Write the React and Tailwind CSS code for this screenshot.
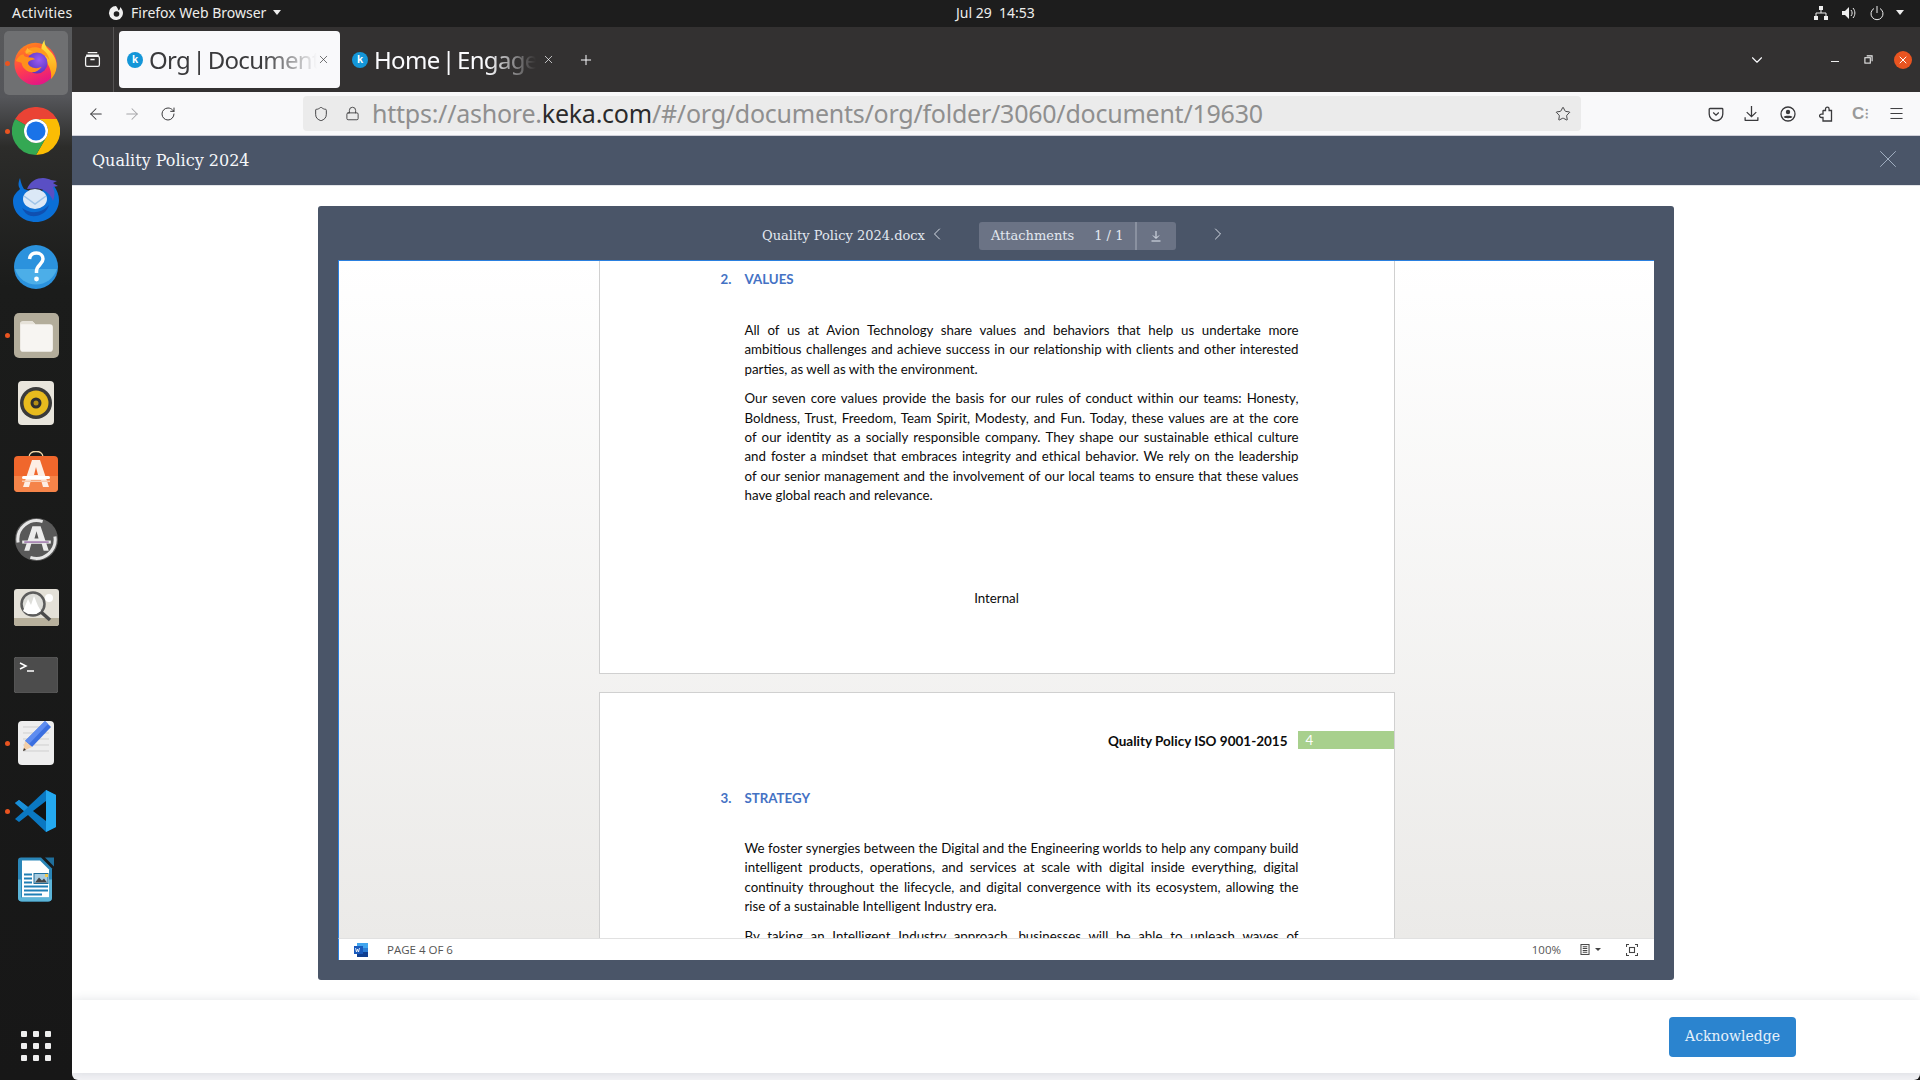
import React from 'react';
import { ArrowLeft, ArrowRight, RotateCw, Shield, Lock, Star, Menu, Plus, X, ChevronDown, ChevronLeft, ChevronRight } from 'lucide-react';

const FirefoxIcon = () => (
  <svg viewBox="0 0 48 48" className="w-[46px] h-[48px] mb-[3px]">
    <defs>
      <linearGradient id="ffBody" x1="0.2" y1="0" x2="0.6" y2="1">
        <stop offset="0" stopColor="#ff8a16" />
        <stop offset="0.55" stopColor="#ff3d50" />
        <stop offset="1" stopColor="#e31587" />
      </linearGradient>
      <linearGradient id="ffFlame" x1="0.5" y1="0" x2="0.5" y2="1">
        <stop offset="0" stopColor="#ffe847" />
        <stop offset="1" stopColor="#ff980e" />
      </linearGradient>
      <radialGradient id="ffCore" cx="0.6" cy="0.35" r="0.8">
        <stop offset="0" stopColor="#9a5cf0" />
        <stop offset="1" stopColor="#4a2ab8" />
      </radialGradient>
    </defs>
    <circle cx="23.5" cy="26" r="22" fill="url(#ffBody)" />
    <path d="M33 1c-.5 5 2 8 6 12 5 5 7 11 6.500 16-.5 6-3 10-6 13 1-5 0-11-4-17-3-5-6-8-6-14 0-4 2-8 3.500-10z" fill="url(#ffFlame)" />
    <path d="M12 13c4-4 11-6 17-3 4 2 8 6 9 12-4-5-9-7-14-6-5 0-10 2-12-3z" fill="#ff9a1f" />
    <circle cx="25" cy="25" r="11" fill="url(#ffCore)" />
    <path d="M3 23c2-4 5-7 8-7 0 2 2 3 5 3 4 0 6 1 7 2-3 1-6 1-7 3-1 2 1 4 3 5 3 2 7 2 11 0-3 5-9 7-14 5-4-2-7-6-7-9-2-1-4-1-6-2z" fill="#ff8f1c" />
    <path d="M14 15c-1-2 0-4 1-6 1 2 3 3 6 4-3 0-5 1-7 2z" fill="#ffb52e" />
  </svg>
);

const ChromeIcon = () => (
  <svg viewBox="0 0 48 48" className="w-[48px] h-[48px]">
    <path d="M3.200 12A24 24 0 0 1 44.800 12H24A12 12 0 0 0 13.600 18Z" fill="#ea4335" />
    <path d="M44.800 12A24 24 0 0 1 24 48L34.400 30A12 12 0 0 0 24 12Z" fill="#fbbc04" />
    <path d="M24 48A24 24 0 0 1 3.200 12L13.600 18A12 12 0 0 0 34.400 30Z" fill="#34a853" />
    <circle cx="24" cy="24" r="12" fill="#fff" />
    <circle cx="24" cy="24" r="9.500" fill="#1a73e8" />
  </svg>
);

const ThunderbirdIcon = () => (
  <svg viewBox="0 0 48 48" className="w-[48px] h-[48px]">
    <path d="M8 3c-2 5-2 8 0 11-3 3-7 6-7 12 0 12 10 21 23 21s23-10 23-22c0-5-2-10-5-14L24 18 12 14c-2-3-3-6-4-11z" fill="#0a6fd6" />
    <path d="M15 14c3-8 10-11 16-11 3 0 6 1 8 2l6 1-4 2 5 3-5 1c2 4 2 9 0 14-2-6-7-11-13-12-5-1-9 0-13 0z" fill="#5a4fc4" />
    <ellipse cx="23" cy="24" rx="12" ry="10" fill="#dbe8f6" />
    <path d="M12 21l11 8 11-8" fill="none" stroke="#9fc4e8" strokeWidth="1.500" />
    <path d="M10 33c8 6 19 6 27-3-2 8-10 12-18 11-4-1-7-4-9-8z" fill="#0f4fb0" />
  </svg>
);

const HelpIcon = () => (
  <svg viewBox="0 0 44 44" className="w-[44px] h-[44px]">
    <circle cx="22" cy="22" r="22" fill="#2b92dd" />
    <path d="M1 24h42a22 22 0 0 1-42 0z" fill="#4caee8" />
    <path d="M15.500 14c.5-4 3.500-6 7-6s6.500 2.500 6.500 6c0 5-6.500 6-6.500 12v2" fill="none" stroke="#fff" strokeWidth="3.500" />
    <circle cx="22.500" cy="34" r="2.400" fill="#fff" />
  </svg>
);

const FilesIcon = () => (
  <svg viewBox="0 0 44 44" className="w-[45px] h-[45px]">
    <rect x="0" y="0" width="44" height="44" rx="5" fill="#b3ad9b" />
    <path d="M6 11a3 3 0 0 1 3-3h9l3 3h14a3 3 0 0 1 3 3v21a3 3 0 0 1-3 3H9a3 3 0 0 1-3-3z" fill="#f7f5f2" />
    <path d="M6 11a3 3 0 0 1 3-3h9l3 3z" fill="#e6e2d9" />
  </svg>
);

const RhythmboxIcon = () => (
  <svg viewBox="0 0 36 44" className="w-[36px] h-[44px]">
    <rect x="0" y="0" width="36" height="44" rx="4" fill="#e8e5dc" />
    <circle cx="18" cy="22" r="16" fill="#3a3a3a" />
    <circle cx="18" cy="22" r="12.500" fill="#e8bb1e" />
    <circle cx="18" cy="22" r="5.500" fill="#2f2f2f" />
    <circle cx="18" cy="22" r="2.500" fill="#b58f16" />
  </svg>
);

const StoreIcon = () => (
  <svg viewBox="0 -5 44 41" className="w-[44px] h-[41px]">
    <path d="M15 1C15-6.500 29-6.500 29 1" fill="none" stroke="#f0d6a8" strokeWidth="1.500" />
    <rect x="0" y="0" width="44" height="36" rx="4" fill="#f0672c" />
    <path d="M0 20h44v12a4 4 0 0 1-4 4H4a4 4 0 0 1-4-4z" fill="#f58449" />
    <path d="M18 4h8l9 27h-6l-2-7H17l-2 7H9zM20 19h4l-2-8z" fill="#fdeee4" fillRule="evenodd" />
    <rect x="8" y="20" width="28" height="3" rx="1.500" fill="#fff" />
    <rect x="8" y="24.500" width="28" height="1.500" fill="#f9c9ab" />
  </svg>
);

const UpdaterIcon = () => (
  <svg viewBox="0 0 44 44" className="w-[45px] h-[45px]">
    <circle cx="22" cy="22" r="21" fill="#595959" />
    <path d="M4 25A18.500 18.500 0 0 1 28 4.500M40 19a18.500 18.500 0 0 1-24 20.500" fill="none" stroke="#e6e6e6" strokeWidth="3" />
    <path d="M18 9h8l8 24h-5l-2-7H17l-2 7h-5zM20 21h4l-2-7z" fill="#ececec" fillRule="evenodd" />
    <path d="M8 23h28v3H8z" fill="#e8e8e8" />
    <path d="M10 24h24v1H10z" fill="#7a3f8f" />
  </svg>
);

const ViewerIcon = () => (
  <svg viewBox="0 0 45 37" className="w-[45px] h-[37px]">
    <rect x="0" y="0" width="45" height="37" rx="3" fill="#e4e1d8" />
    <path d="M0 29h45v5a3 3 0 0 1-3 3H3a3 3 0 0 1-3-3z" fill="#b7b09c" />
    <circle cx="35" cy="9" r="4" fill="#fff" />
    <circle cx="19" cy="15" r="11.500" fill="#dededa" stroke="#5c5c5c" strokeWidth="2.500" />
    <path d="M9 22l5-12 3 6 3-9 4 10 3 5-5 3h-8z" fill="#fff" />
    <path d="M27 23l9 8" stroke="#4a4a4a" strokeWidth="3.500" />
  </svg>
);

const TerminalIcon = () => (
  <svg viewBox="0 0 44 36" className="w-[44px] h-[36px]">
    <rect x="0" y="0" width="44" height="36" rx="3" fill="#4c4c4c" stroke="#5c5c5c" />
    <path d="M6 6l6 3-6 3" fill="none" stroke="#fff" strokeWidth="1.500" />
    <path d="M13 14h7" stroke="#fff" strokeWidth="1.500" />
  </svg>
);

const EditorIcon = () => (
  <svg viewBox="0 0 36 44" className="w-[36px] h-[44px]">
    <rect x="0" y="0" width="36" height="44" rx="4" fill="#eeeeee" />
    <path d="M5 6h26M5 12h26M5 18h26M5 24h26M5 30h26" stroke="#cfcfcf" strokeWidth="1" />
    <path d="M27 0l6 6-19 20-7-6z" fill="#3b6fe0" />
    <path d="M27 0l3 3-19 20-4-3z" fill="#5e8cf0" />
    <path d="M7 20l7 6-9 4z" fill="#f3cfa8" />
    <path d="M5 30l1-3 2 2z" fill="#333" />
  </svg>
);

const VSCodeIcon = () => (
  <svg viewBox="0 0 44 44" className="w-[44px] h-[44px]">
    <path d="M32 1l10 5v32l-10 5-18-17-9 7-4-3 9-8-9-8 4-3 9 7z" fill="#0a78c2" />
    <path d="M32 1l10 5v32l-10 5z" fill="#24a9f0" />
    <path d="M32 12L19 22l13 10z" fill="#111" />
    <path d="M32 1L14 18l-9-7-4 3 9 8z" fill="#1a8fd8" />
  </svg>
);

const WriterIcon = () => (
  <svg viewBox="0 0 36 44" className="w-[36px] h-[45px]">
    <path d="M27 0h9v9z" fill="#1f6f9c" />
    <path d="M3 0h20l11 11v29a4 4 0 0 1-4 4H4a4 4 0 0 1-4-4V3a3 3 0 0 1 3-3z" fill="#2a86b8" />
    <path d="M4 3h18l9 9v28H4z" fill="#fff" />
    <path d="M0 22h3v18h28V22h3v18a4 4 0 0 1-4 4H4a4 4 0 0 1-4-4z" fill="#5cb5d8" />
    <path d="M6 16h8v2H6zM6 20h8v2H6zM6 24h8v2H6zM6 28h24v2H6zM6 32h24v2H6zM6 36h18v2H6z" fill="#1f7fb5" />
    <rect x="16" y="16" width="14" height="10" fill="#a6cbe0" stroke="#1f6f9c" />
    <path d="M17 25l4-5 3 3 2-2 3 4z" fill="#444" />
    <rect x="27" y="16.500" width="3" height="3" fill="#f2c94c" />
  </svg>
);

const KekaFavicon = () => (
  <span className="w-4 h-4 rounded-full bg-[#1496d8] flex items-center justify-center text-white text-[11px] font-bold tracking-normal leading-none shrink-0 font-['Liberation_Sans',sans-serif]">k</span>
);

const WordIcon = () => (
  <svg viewBox="0 0 14 14" className="w-[14px] h-[14px]">
    <rect x="3" y="0" width="11" height="5" fill="#41a5ee" />
    <rect x="3" y="5" width="11" height="4" fill="#2b7cd3" />
    <rect x="3" y="9" width="11" height="5" fill="#103f91" />
    <rect x="0" y="3" width="9" height="8" fill="#185abd" />
    <path d="M1.500 5l1 4 1-3 1 3 1-4" fill="none" stroke="#fff" strokeWidth="0.800" />
  </svg>
);

const dockItems = [
  { icon: <FirefoxIcon />, dot: true, active: true },
  { icon: <ChromeIcon />, dot: true },
  { icon: <ThunderbirdIcon /> },
  { icon: <HelpIcon /> },
  { icon: <FilesIcon />, dot: true },
  { icon: <RhythmboxIcon /> },
  { icon: <StoreIcon /> },
  { icon: <UpdaterIcon /> },
  { icon: <ViewerIcon /> },
  { icon: <TerminalIcon /> },
  { icon: <EditorIcon />, dot: true },
  { icon: <VSCodeIcon />, dot: true },
  { icon: <WriterIcon /> },
];

const Dock = () => (
  <div className="w-[72px] shrink-0 flex flex-col pt-[2px] bg-[linear-gradient(to_bottom,#58595b_0,#55565a_70px,#2c2c2a_120px,#1b1c1b_260px,#171717_100%)]">
    {dockItems.map((item, i) => (
      <div key={i} className="relative h-[68px] flex items-center justify-center shrink-0">
        {item.active && <div className="absolute left-[4px] top-[2px] w-[64px] h-[64px] rounded-[5px] bg-[#6f7072]" />}
        <div className="relative flex">{item.icon}</div>
        {item.dot && <span className="absolute left-[5px] top-[32px] w-[5px] h-[5px] rounded-full bg-[#e95420]" />}
      </div>
    ))}
    <div className="mt-auto mb-[19px] ml-[21px] grid grid-cols-3 gap-[6px] w-[30px]">
      {[...Array(9)].map((_, i) => (
        <span key={i} className="w-[6px] h-[6px] rounded-[1px] bg-[#eeeeee]" />
      ))}
    </div>
  </div>
);

const TopBar = () => (
  <div className="h-[27px] shrink-0 bg-[#1d1d1d] flex items-center pb-[2px] text-[#eeeeec] text-[14px] font-['Noto_Sans',sans-serif]">
    <div className="w-[956px] flex items-center shrink-0">
      <span className="ml-[12px] w-[62px] tracking-[0.2px]">Activities</span>
      <svg viewBox="0 0 16 16" className="w-4 h-4 ml-[34px]">
        <path d="M8 1a7 7 0 1 0 6.500 4.500C14 4 13 3 12 2c.3 2-.5 3-1.500 3.500C10 4 9 2 8 1z" fill="#eee" />
        <circle cx="8.500" cy="9" r="2.800" fill="#1d1d1d" />
      </svg>
      <span className="ml-[7px]">Firefox Web Browser</span>
      <span className="ml-[7px] w-0 h-0 border-x-[4.500px] border-x-transparent border-t-[5px] border-t-[#eee]" />
    </div>
    <span className="w-[90px] shrink-0">Jul 29&nbsp;&nbsp;14:53</span>
    <div className="ml-auto flex items-center mr-[16px]">
      <svg viewBox="0 0 16 16" className="w-4 h-4">
        <path d="M6 1h4v4H6zM1 11h4v4H1zM11 11h4v4h-4z" fill="#eee" />
        <path d="M8 5v3M3 11V8h10v3" fill="none" stroke="#eee" strokeWidth="1" />
      </svg>
      <svg viewBox="0 0 16 16" className="w-4 h-4 ml-[12px]">
        <path d="M1 6h3l4-4v12l-4-4H1z" fill="#eee" />
        <path d="M10 5c1.500 2 1.500 4 0 6M12 3c2.500 3 2.500 7 0 10" fill="none" stroke="#eee" strokeWidth="1" />
      </svg>
      <svg viewBox="0 0 16 16" className="w-4 h-4 ml-[12px]">
        <path d="M5 3.500a6 6 0 1 0 6 0M8 1v7" fill="none" stroke="#eee" strokeWidth="1" />
      </svg>
      <span className="ml-[11px] w-0 h-0 border-x-[4.500px] border-x-transparent border-t-[5px] border-t-[#eee]" />
    </div>
  </div>
);

const TabBar = () => (
  <div className="h-[65px] shrink-0 bg-[#333131] flex items-center text-[24px] tracking-[-0.7px] [word-spacing:-3px] font-['Noto_Sans',sans-serif]">
    <div className="w-[42px] h-full flex items-center justify-center border-r border-[#555353] shrink-0">
      <svg viewBox="0 0 16 16" className="w-[17px] h-[17px] text-[#f5f5f5]" fill="none" stroke="currentColor" strokeWidth="1.200">
        <path d="M3.500 1.500h9M2 4h12" />
        <rect x="1.500" y="5" width="13" height="9.500" rx="1.500" />
        <path d="M6 8h4" />
      </svg>
    </div>
    <div className="ml-[5px] w-[221px] h-[57px] bg-[#f9f9fb] rounded-[4px] flex items-center text-[#3a3a3c] pl-[8px] shrink-0">
      <KekaFavicon />
      <span className="ml-[6px] w-[168px] overflow-hidden whitespace-nowrap [mask-image:linear-gradient(to_right,black_68%,transparent_100%)]">Org | Document</span>
      <X size={13} strokeWidth={1.300} className="shrink-0" />
    </div>
    <div className="ml-[12px] flex items-center text-[#fbfbfe] shrink-0">
      <KekaFavicon />
      <span className="ml-[6px] w-[162px] overflow-hidden whitespace-nowrap [mask-image:linear-gradient(to_right,black_70%,transparent_100%)]">Home | Engage</span>
      <X size={13} strokeWidth={1.300} className="ml-[6px] shrink-0" />
    </div>
    <Plus size={16} strokeWidth={1.500} className="ml-[23px] text-[#fbfbfe] shrink-0" />
    <ChevronDown size={18} strokeWidth={1.500} className="ml-auto text-[#fbfbfe] shrink-0" />
    <span className="ml-[65px] w-[8px] h-[1.500px] bg-[#eee] shrink-0 mt-[4px]" />
    <svg viewBox="0 0 10 10" className="ml-[25px] w-[9px] h-[9px] shrink-0" fill="none" stroke="#eee" strokeWidth="1.200">
      <rect x="1" y="3" width="6" height="6" />
      <path d="M3 1h6v6" />
    </svg>
    <span className="ml-[21px] mr-[8px] w-[18px] h-[18px] rounded-full bg-[#e95420] flex items-center justify-center shrink-0">
      <X size={12} strokeWidth={2} className="text-white" />
    </span>
  </div>
);

const NavBar = () => (
  <div className="h-[44px] shrink-0 bg-[#f9f9fa] border-b border-[#cfcfd8] flex items-center text-[#3a3a3c] font-['Noto_Sans',sans-serif]">
    <ArrowLeft size={18} strokeWidth={1.400} className="ml-[15px] shrink-0" />
    <ArrowRight size={18} strokeWidth={1.400} className="ml-[18px] text-[#a5a5a8] shrink-0" />
    <RotateCw size={16} strokeWidth={1.500} className="ml-[19px] shrink-0" />
    <div className="ml-[127px] w-[1278px] h-[35px] rounded-[4px] bg-[#ebebeb] flex items-center shrink-0">
      <Shield size={16} strokeWidth={1.400} className="ml-[10px] shrink-0" />
      <Lock size={15} strokeWidth={1.400} className="ml-[15.500px] shrink-0" />
      <span className="ml-[12.500px] text-[25px] tracking-[-0.24px] text-[#8f8f8f] whitespace-nowrap">
        https://ashore.<span className="text-[#2b2b2b]">keka.com</span>/#/org/documents/org/folder/3060/document/19630
      </span>
      <Star size={16} strokeWidth={1.400} className="ml-auto mr-[10px] shrink-0" />
    </div>
    <div className="ml-auto flex items-center mr-[15.500px]">
      <svg viewBox="0 0 16 16" className="w-4 h-4 shrink-0" fill="none" stroke="currentColor" strokeWidth="1.300">
        <path d="M2 2.500h12a.8.8 0 0 1 .8.8V8a6.800 6.800 0 0 1-13.600 0V3.300A.8.8 0 0 1 2 2.500z" />
        <path d="M5.200 6.500L8 9.200l2.800-2.700" />
      </svg>
      <svg viewBox="0 0 16 16" className="ml-[18.500px] w-[17px] h-[17px] shrink-0" fill="none" stroke="currentColor" strokeWidth="1.200">
        <path d="M8 1v10M3.500 6.700L8 11l4.500-4.300M2 11.500v2.500c0 .3.200.5.500.5h11c.3 0 .5-.2.500-.5v-2.500" />
      </svg>
      <svg viewBox="0 0 16 16" className="ml-[20.500px] w-4 h-4 shrink-0">
        <circle cx="8" cy="8" r="7" fill="none" stroke="currentColor" strokeWidth="1.300" />
        <circle cx="8" cy="6" r="2.200" fill="currentColor" />
        <path d="M3.500 11c1-1.800 8-1.800 9 0-1.200 1.600-7.800 1.600-9 0z" fill="currentColor" />
      </svg>
      <svg viewBox="0 0 16 16" className="ml-[20.500px] w-4 h-4 shrink-0" fill="none" stroke="currentColor" strokeWidth="1.300">
        <path d="M6.500 4.500h2V3a1.800 1.800 0 0 1 3.600 0v1.500h2.400v10.500H6V11.500H4.300a1.700 1.700 0 0 1 0-3.400H6V5a.5.5 0 0 1 .5-.5z" />
      </svg>
      <span className="ml-[19.500px] flex items-center text-[#9a9a9a] font-bold text-[17px] leading-none w-4 shrink-0 font-['Liberation_Sans',sans-serif]">C<span className="text-[13px] ml-[1px]">⁝</span></span>
      <Menu size={17} strokeWidth={1.400} className="ml-[19.500px] shrink-0" />
    </div>
  </div>
);

// one justified line of the docx preview
const JLine = ({ children, last }) => (
  <div className={last ? 'w-[554px] whitespace-nowrap' : 'w-[554px] text-justify [text-align-last:justify] whitespace-nowrap'}>{children}</div>
);

const Heading = ({ num, title }) => (
  <div className="flex pl-[121px] text-[#4472c4] font-bold leading-[19px]">
    <span className="w-[24px]">{num}</span>
    <span>{title}</span>
  </div>
);

const DocumentPane = () => (
  <div className="flex-1 min-h-0 flex flex-col items-center overflow-hidden border-l border-t border-[#2a80e0] bg-[linear-gradient(to_bottom,#ffffff,#ebeae8)] font-['Lato',sans-serif] text-[13.3px] text-[#0c0c0c]">
    <div className="w-[796px] h-[413px] shrink-0 bg-white border-x border-b border-[#d0d0d0] pt-[9px]">
      <Heading num="2." title="VALUES" />
      <div className="pl-[145px] mt-[32px] leading-[19.4px]">
        <JLine>All of us at Avion Technology share values and behaviors that help us undertake more</JLine>
        <JLine>ambitious challenges and achieve success in our relationship with clients and other interested</JLine>
        <JLine last>parties, as well as with the environment.</JLine>
        <div className="h-[10px]" />
        <JLine>Our seven core values provide the basis for our rules of conduct within our teams: Honesty,</JLine>
        <JLine>Boldness, Trust, Freedom, Team Spirit, Modesty, and Fun. Today, these values are at the core</JLine>
        <JLine>of our identity as a socially responsible company. They shape our sustainable ethical culture</JLine>
        <JLine>and foster a mindset that embraces integrity and ethical behavior. We rely on the leadership</JLine>
        <JLine>of our senior management and the involvement of our local teams to ensure that these values</JLine>
        <JLine last>have global reach and relevance.</JLine>
      </div>
      <div className="mt-[83px] text-center leading-[19px]">Internal</div>
    </div>
    <div className="w-[796px] mt-[18px] flex-1 min-h-[300px] shrink-0 bg-white border-x border-t border-[#d0d0d0] pt-[38px]">
      <div className="flex items-center justify-end h-[18px]">
        <span className="font-bold mr-[10px] pt-[2px] text-[13.5px]">Quality Policy ISO 9001-2015</span>
        <span className="w-[96px] h-[18px] bg-[#a8d08d] text-white pl-[8px] leading-[18px]">4</span>
      </div>
      <div className="mt-[40px]">
        <Heading num="3." title="STRATEGY" />
      </div>
      <div className="pl-[145px] mt-[31px] leading-[19.4px]">
        <JLine>We foster synergies between the Digital and the Engineering worlds to help any company build</JLine>
        <JLine>intelligent products, operations, and services at scale with digital inside everything, digital</JLine>
        <JLine>continuity throughout the lifecycle, and digital convergence with its ecosystem, allowing the</JLine>
        <JLine last>rise of a sustainable Intelligent Industry era.</JLine>
        <div className="h-[10px]" />
        <JLine>By taking an Intelligent Industry approach, businesses will be able to unleash waves of</JLine>
      </div>
    </div>
  </div>
);

const StatusBar = () => (
  <div className="h-[22px] shrink-0 bg-white border-t border-[#e1e1e1] border-l-[1px] border-l-[#2a80e0] flex items-center text-[11.500px] text-[#555555] font-['Open_Sans',sans-serif]">
    <span className="ml-[15px]"><WordIcon /></span>
    <span className="ml-[19px]">PAGE 4 OF 6</span>
    <span className="ml-auto">100%</span>
    <svg viewBox="0 0 10 12" className="ml-[19px] w-[10px] h-[11px]" fill="none" stroke="#444" strokeWidth="1.100">
      <rect x="0.600" y="0.600" width="8.800" height="10.800" />
      <path d="M2.500 3h5M2.500 5h5M2.500 7h5M2.500 9h5" />
    </svg>
    <span className="ml-[5px] w-0 h-0 border-x-[3px] border-x-transparent border-t-[3px] border-t-[#444]" />
    <svg viewBox="0 0 12 12" className="ml-[25px] mr-[16px] w-[12px] h-[12px]" fill="none" stroke="#444" strokeWidth="1.100">
      <path d="M0.500 3V0.500H3M9 0.500h2.500V3M11.500 9v2.500H9M3 11.500H0.500V9" />
      <rect x="3.500" y="3.500" width="5" height="5" />
    </svg>
  </div>
);

const ViewerToolbar = () => (
  <div className="h-[54px] shrink-0 flex items-center pl-[424px] pt-[6px] text-[13px] text-[#e2e8f0]">
    <span className="whitespace-nowrap">Quality Policy 2024.docx</span>
    <ChevronLeft size={20} strokeWidth={1.100} className="ml-[2px] mb-[4px] shrink-0" />
    <div className="ml-[32px] w-[197px] h-[28px] rounded-[3px] bg-[#6b7385] flex items-center shrink-0">
      <span className="ml-[12px]">Attachments</span>
      <span className="ml-[20px]">1 / 1</span>
      <span className="ml-[12px] w-[2px] h-full bg-[#8a91a0]" />
      <svg viewBox="0 0 12 12" className="ml-[13px] w-[12px] h-[12px]" fill="none" stroke="currentColor" strokeWidth="1">
        <path d="M6 1v7M3 5.500L6 8.500l3-3M1.500 11h9" />
      </svg>
    </div>
    <ChevronRight size={20} strokeWidth={1.100} className="ml-[32px] mb-[4px] shrink-0" />
  </div>
);

export default function App() {
  return (
    <div className="w-screen h-screen flex flex-col overflow-hidden bg-[#171717] font-['DejaVu_Serif',serif]">
      <TopBar />
      <div className="flex-1 min-h-0 flex">
        <Dock />
        <div className="flex-1 min-w-0 flex flex-col rounded-b-[6px] overflow-hidden">
          <TabBar />
          <NavBar />
          <div className="h-[50px] shrink-0 bg-[#4a5568] border-b border-[#e2e4e8] flex items-center justify-between pl-[20px] pr-[17px] text-white text-[16px]">
            <span className="text-[#f5f7fa]">Quality Policy 2024</span>
            <X size={30} strokeWidth={0.800} className="text-[#a0aec0] mb-[4px]" />
          </div>
          <div className="flex-1 min-h-0 px-[246px] pt-[20px] pb-[20px] bg-white">
            <div className="h-full rounded-[3px] bg-[#4a5568] px-[20px] pb-[20px] flex flex-col">
              <ViewerToolbar />
              <DocumentPane />
              <StatusBar />
            </div>
          </div>
          <div className="h-[73px] shrink-0 bg-white shadow-[0_0_10px_rgba(74,85,104,0.16)] relative flex items-center justify-end pr-[124px]">
            <button className="w-[127px] h-[40px] rounded-[4px] bg-[#2b84cf] text-[#e6f1fb] text-[14px]">Acknowledge</button>
          </div>
          <div className="h-[7px] shrink-0 bg-[#f3f3f6]" />
        </div>
      </div>
    </div>
  );
}
